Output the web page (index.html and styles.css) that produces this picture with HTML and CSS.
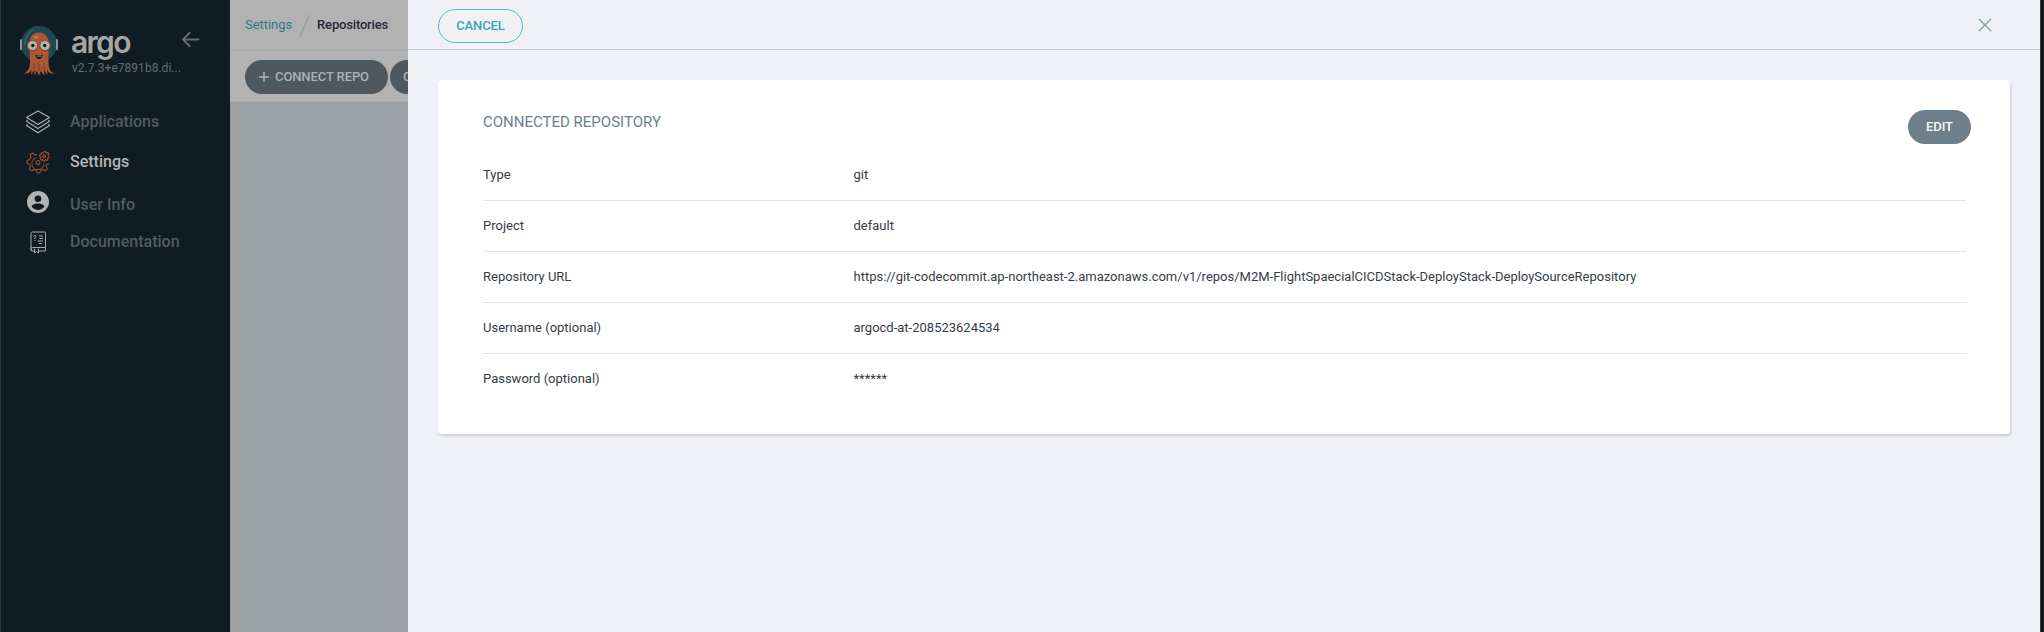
FILE: index.html
```html
<!DOCTYPE html>
<html lang="en">
<head>
<meta charset="utf-8">
<title>Repositories - Argo CD</title>
<link rel="stylesheet" href="styles.css">
</head>
<body>
<div class="layout">
  <aside class="sidebar">
    <div class="brand">
      <svg class="brand-logo" width="40" height="52" viewBox="0 0 40 52">
        <circle cx="20" cy="19" r="18" fill="#20474f"/>
        <path d="M6 20C6 13 9 8 14 5" fill="none" stroke="#42646b" stroke-width="1.2" stroke-linecap="round"/>
        <rect x="1" y="14" width="2" height="11" rx=".8" fill="#8b959c"/>
        <rect x="37" y="14" width="2" height="11" rx=".8" fill="#8b959c"/>
        <path d="M11 17C11 10 15 7.500 20 7.500S29.500 11 29.500 17V37C30 43 31 47 35 48.500C31 49.500 29 47 28 44L28.500 50L25 45L25.500 50.500L21.500 46L20 51L18 46L15 50.500L15.500 45L12 50L12.500 44C11 48 9 49 5 48.500C10 46 11 42 11 37Z" fill="#ab5735"/>
        <path d="M15 38V45M20 39V46M25 38V45" stroke="#7d3b29" stroke-width="1"/>
        <ellipse cx="17" cy="12" rx="2.500" ry="1.600" fill="#bd7659"/>
        <circle cx="13.500" cy="21" r="5.600" fill="#91452f"/>
        <circle cx="26" cy="21" r="5.600" fill="#91452f"/>
        <circle cx="13.500" cy="20.500" r="4.600" fill="#b5b3b2"/>
        <circle cx="26" cy="20.500" r="4.600" fill="#b5b3b2"/>
        <circle cx="13.800" cy="20.500" r="1.700" fill="#10171f"/>
        <circle cx="25.700" cy="20.500" r="1.700" fill="#10171f"/>
        <path d="M16.500 29.500Q20 31.500 23.500 29.500Q23 34 20 34T16.500 29.500Z" fill="#14161b"/>
        <path d="M18 30.400Q20 31 22 30.400V31.500H18Z" fill="#b5b3b2"/>
      </svg>
      <div class="brand-text">
        <div class="wordmark">argo</div>
        <div class="version">v2.7.3+e7891b8.di...</div>
      </div>
      <svg class="collapse" width="20" height="18" viewBox="0 0 20 18"><path d="M17.500 8.500H2M8.500 2L2 8.500L8.500 15" fill="none" stroke="#656a73" stroke-width="2" stroke-linecap="round" stroke-linejoin="round"/></svg>
    </div>
    <nav class="nav">
      <a class="nav-item applications">
        <svg width="26" height="26" viewBox="0 0 26 26" fill="none" stroke="#aeb1b4" stroke-width="1.100" stroke-linejoin="round"><path d="M13 2L24.500 8.500L13 15.500L1.500 8.500Z"/><path d="M2.500 11L1.500 12.300L13 19.500L24.500 12.300L23.500 11M2.500 15L1.500 16.500L13 23.800L24.500 16.500L23.500 15"/></svg>
        <span>Applications</span>
      </a>
      <a class="nav-item settings active">
        <svg width="26" height="26" viewBox="0 0 26 26" fill="none" stroke="#a4512f" stroke-width="1.050" stroke-linejoin="round"><path d="M12 5.500L9.500 6L8 4L5 5.500L6 8.200L4.500 10.500L2 11.500V14.500L4.500 15L5.500 17.300L4 20L7 22L9 20.500L11.500 21.500L12 24H15L15.500 21.500L18 20.500L20.500 22L22.500 19.500L21 17.500L21.800 15L24 14.500"/><path d="M11 8.800A6 6 0 1 0 18.800 14.500"/><circle cx="13" cy="13.500" r="2"/><path d="M17 3.500L18 4L19 2.500H20.500L21 4L22.500 3.500L23.700 4.500L23 6L24 7V8.500L22.700 9L23 10.500L21.700 11.500L20.500 10.500L19.500 12H18L17.500 10.500L16 10.700L15 9.500L16 8.300L14.700 7.500V6L16 5.500Z"/><circle cx="19.200" cy="7.300" r="1.300"/></svg>
        <span>Settings</span>
      </a>
      <a class="nav-item user">
        <svg width="26" height="26" viewBox="0 0 26 26"><circle cx="13" cy="13" r="11" fill="#b3b3b3"/><circle cx="13" cy="9.800" r="3.300" fill="#0f1c24"/><path d="M6.500 17.300C8 14.800 11 14.500 13 14.500S18 14.800 19.500 17.300C17.800 19.800 15.500 21 13 21S8.200 19.800 6.500 17.300Z" fill="#0f1c24"/></svg>
        <span>User Info</span>
      </a>
      <a class="nav-item docs">
        <svg width="26" height="26" viewBox="0 0 26 26" fill="none" stroke="#a6aaad" stroke-width="1" stroke-linejoin="round"><path d="M9 22H7.500A1.800 1.800 0 0 1 6 20V4.500A1.700 1.700 0 0 1 7.700 3H19.500Q20.500 3 20.500 4V18.500H7.500A1.700 1.700 0 0 0 7.500 22M14 22H20.500V18.500M9.500 19.500V24L11.500 22.500L13.500 24V19.500"/><path d="M14 7H18M14.500 9.500H18M12.500 12H18M14 14.500H17"/><path d="M8.500 7.500Q9 6 10.400 6.500Q11.500 7.600 9.800 9V10M9.800 11V12"/></svg>
        <span>Documentation</span>
      </a>
    </nav>
  </aside>
  <main class="page">
    <header class="breadcrumbs">
      <a class="crumb-link">Settings</a>
      <svg class="slash" width="12" height="24" viewBox="0 0 12 24"><path d="M1 22.500L10.500 1" stroke="#92969e" stroke-width="1.200"/></svg>
      <span class="crumb-current">Repositories</span>
    </header>
    <div class="toolbar">
      <button class="btn btn-dim connect"><svg width="10" height="12" viewBox="0 0 10 12"><path d="M5 1V11M0 6H10" stroke="#b0b2b3" stroke-width="1.500"/></svg>CONNECT REPO</button>
      <button class="btn btn-dim next">C</button>
    </div>
  </main>
  <section class="panel">
    <header class="panel-header">
      <button class="btn btn-outline">CANCEL</button>
      <svg class="close" width="14" height="14" viewBox="0 0 14 14"><path d="M1.200 1.200L12.800 12.800M12.800 1.200L1.200 12.800" stroke="#8fa4b1" stroke-width="1.500" stroke-linecap="round"/></svg>
    </header>
    <div class="card">
      <div class="card-head">
        <h1>CONNECTED REPOSITORY</h1>
        <button class="btn btn-edit">EDIT</button>
      </div>
      <dl class="details">
        <div class="row"><dt>Type</dt><dd>git</dd></div>
        <div class="row"><dt>Project</dt><dd>default</dd></div>
        <div class="row"><dt>Repository URL</dt><dd>https://git-codecommit.ap-northeast-2.amazonaws.com/v1/repos/M2M-FlightSpaecialCICDStack-DeployStack-DeploySourceRepository</dd></div>
        <div class="row"><dt>Username (optional)</dt><dd>argocd-at-208523624534</dd></div>
        <div class="row"><dt>Password (optional)</dt><dd>******</dd></div>
      </dl>
    </div>
  </section>
  <div class="edge"></div>
</div>
</body>
</html>
```
FILE: styles.css
```css
* { box-sizing: border-box; }
body { margin: 0; font-family: Roboto, "Liberation Sans", sans-serif; font-size: 13px; color: #363c4a; }
button { font-family: inherit; margin: 0; padding: 0; border: 0; }
svg { display: block; flex: none; }
.layout { display: flex; width: 2044px; height: 632px; overflow: hidden; }

.sidebar { width: 230px; flex: none; background: #0f1c24; border-left: 1px solid #2c383f; }
.brand { display: flex; height: 108px; padding: 25px 0 0 18px; }
.brand-text { width: 109px; flex: none; margin-left: 13px; }
.wordmark { height: 35px; margin-left: -1px; padding-top: 2px; font: 600 30px/30px Inter, sans-serif; color: #a5a5a5; letter-spacing: -1.7px; }
.version { font-size: 12px; line-height: 16px; letter-spacing: .03px; color: #656c73; white-space: nowrap; }
.collapse { margin: 6px 0 0 0; }
.nav-item { display: flex; align-items: center; gap: 19px; padding-left: 24px; font-size: 16px; font-weight: 500; color: #535b63; }
.nav-item span { padding-bottom: 1px; }
.applications { height: 28px; }
.settings { height: 52px; }
.user { height: 32px; }
.user span { padding-bottom: 0; }
.user svg { margin-top: -5px; }
.docs { height: 44px; }
.nav-item.active { color: #b5b6b8; }

.page { width: 178px; flex: none; overflow: hidden; background: #9ba0a4; }
.breadcrumbs { display: flex; align-items: center; height: 51px; padding: 0 0 1px 15px; background: #b2b2b2; border-bottom: 1px solid #a5a8ac; }
.crumb-link { color: #2b7b83; letter-spacing: -.05px; }
.slash { margin: 3px 6px 0 7px; }
.crumb-current { font-weight: 500; letter-spacing: -.17px; color: #262936; }
.toolbar { display: flex; gap: 2px; height: 51px; padding: 9px 0 0 15px; background: #b2b2b2; border-bottom: 1px solid #a8abad; }

.btn { display: flex; align-items: center; flex: none; height: 34px; padding-bottom: 1px; border-radius: 17px; font-size: 13px; font-weight: 500; white-space: nowrap; }
.btn-dim { background: #4d585f; color: #aeb1b3; letter-spacing: -.1px; }
.connect { width: 143px; padding-left: 14px; gap: 6px; }
.next { width: 120px; padding-left: 13px; }

.panel { width: 1632px; flex: none; background: #eff1f6; }
.panel-header { display: flex; align-items: center; justify-content: space-between; height: 50px; padding: 2px 48px 0 30px; border-bottom: 1px solid #c5cacf; }
.btn-outline { width: 85px; justify-content: center; padding: 0; border: 1px solid #4cbccd; background: transparent; color: #3ba5b3; letter-spacing: -.1px; }
.close { margin-bottom: 1px; }
.card { width: 1572px; height: 354px; margin: 30px 0 0 30px; padding: 30px 44px 0 45px; border-radius: 4px; background: #fff; box-shadow: 1px 2px 3px rgba(0, 0, 0, .15); }
.card-head { display: flex; justify-content: space-between; height: 40px; margin-right: -5px; }
.card-head h1 { margin: 2px 0 0; font-size: 15px; line-height: 20px; font-weight: 400; color: #6d7f8b; }
.btn-edit { width: 63px; justify-content: center; background: #6d7f8b; color: #f4f6f7; letter-spacing: -.1px; }
.details { margin: 0; }
.row { display: flex; align-items: center; height: 51px; padding-bottom: 2px; border-bottom: 1px solid #dee6eb; }
.row:last-child { border-bottom: 0; padding-bottom: 3px; }
.row dt { width: 370.5px; flex: none; }
.row dd { margin: 0; }

.edge { width: 4px; flex: none; background: #17181b; border-left: 1px solid #393b40; }
```
